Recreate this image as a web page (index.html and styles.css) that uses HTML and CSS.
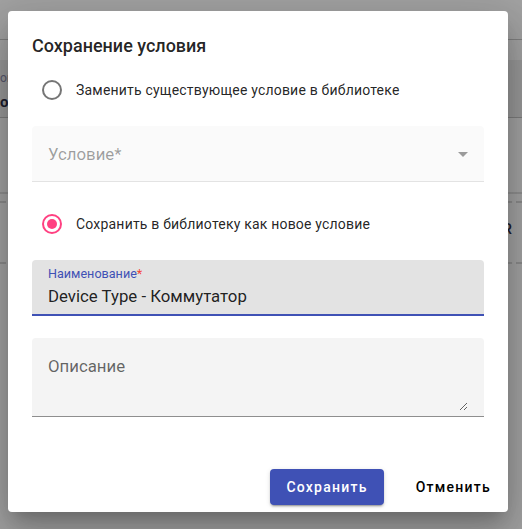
FILE: index.html
```html
<!DOCTYPE html>
<html lang="ru">
<head>
<meta charset="utf-8">
<title>Сохранение условия</title>
<link rel="stylesheet" href="styles.css">
</head>
<body>
<div class="page">
  <div class="pg-top"></div>
  <div class="pg-strip"></div>
  <div class="pg-field">
    <span class="pg-label">оиск</span>
    <span class="pg-value">ом</span>
  </div>
  <div class="pg-space"></div>
  <div class="pg-rule"></div>
  <div class="pg-dash"></div>
  <div class="pg-action"><span>CLEAR</span></div>
  <div class="pg-dash"></div>
</div>

<div class="dialog">
  <h2 class="title">Сохранение условия</h2>

  <label class="radio radio-first">
    <span class="circle"></span>
    <span class="radio-label">Заменить существующее условие в библиотеке</span>
  </label>

  <div class="select">
    <span class="select-placeholder">Условие*</span>
    <span class="select-arrow"></span>
  </div>

  <label class="radio radio-second">
    <span class="circle checked"><span class="dot"></span></span>
    <span class="radio-label">Сохранить в библиотеку как новое условие</span>
  </label>

  <div class="name-field">
    <div class="name-label">Наименование<span class="req">*</span></div>
    <div class="name-value">Device Type - Коммутатор</div>
  </div>

  <div class="desc-field">
    <textarea class="desc-input" placeholder="Описание"></textarea>
  </div>

  <div class="actions">
    <button class="btn btn-primary">Сохранить</button>
    <button class="btn btn-plain">Отменить</button>
  </div>
</div>
</body>
</html>
```

FILE: styles.css
```css
* { box-sizing: border-box; }

html, body {
  margin: 0;
  padding: 0;
}

body {
  width: 522px;
  height: 529px;
  overflow: hidden;
  position: relative;
  background: #a2a2a2;
  font-family: Roboto, "Noto Sans", sans-serif;
}

/* background page under the backdrop */
.page {
  display: flex;
  flex-direction: column;
}

.pg-top {
  height: 40px;
  border-bottom: 1px solid #7f7f7f;
}

.pg-strip {
  height: 20px;
}

.pg-field {
  height: 58px;
  background: #989898;
  border-bottom: 1px solid #7c7c7c;
  display: flex;
  flex-direction: column;
  padding-top: 11px;
}

.pg-label {
  font-size: 12px;
  line-height: 14px;
  color: #56566c;
}

.pg-value {
  margin-top: 8px;
  font-size: 15px;
  line-height: 18px;
  font-weight: 700;
  color: #1c1c2c;
}

.pg-space {
  height: 74px;
}

.pg-rule {
  height: 2px;
  background: #8e8e8e;
}

.pg-dash {
  margin-top: 7px;
  border-top: 2px dashed #8a8a8a;
}

.pg-action {
  height: 52px;
  display: flex;
  align-items: center;
  justify-content: flex-end;
  padding-right: 9px;
  font-size: 15px;
  font-weight: 500;
  color: #1c1c2c;
  letter-spacing: 1px;
}

/* dialog */
.dialog {
  position: absolute;
  left: 8px;
  top: 11px;
  width: 500px;
  padding: 19px 24px 7px;
  background: #fff;
  border-radius: 4px;
  box-shadow: 0 11px 15px -7px rgba(0,0,0,.2),
              0 24px 38px 3px rgba(0,0,0,.14),
              0 9px 46px 8px rgba(0,0,0,.12);
}

.title {
  margin: 0;
  font-size: 18px;
  line-height: 32px;
  font-weight: 500;
  color: rgba(0,0,0,.87);
}

.radio {
  display: flex;
  align-items: center;
  gap: 14px;
  height: 20px;
  margin-left: 10px;
  font-size: 14px;
  line-height: 20px;
  letter-spacing: 0.2px;
  color: rgba(0,0,0,.87);
}

.radio-first { margin-top: 18px; }
.radio-second { margin-top: 32px; }

.circle {
  width: 20px;
  height: 20px;
  flex: none;
  border: 2px solid rgba(0,0,0,.54);
  border-radius: 50%;
  display: flex;
  align-items: center;
  justify-content: center;
}

.circle.checked {
  border-color: #ff4081;
}

.dot {
  width: 10px;
  height: 10px;
  border-radius: 50%;
  background: #ff4081;
}

.select {
  margin-top: 26px;
  height: 56px;
  padding: 18px 16px 0;
  background: #fafafa;
  border-bottom: 1px solid #e3e3e3;
  border-radius: 4px 4px 0 0;
  display: flex;
  justify-content: space-between;
  align-items: flex-start;
}

.select-placeholder {
  font-size: 16.8px;
  line-height: 20px;
  color: rgba(0,0,0,.38);
}

.select-arrow {
  margin-top: 8px;
  width: 0;
  height: 0;
  border-left: 5px solid transparent;
  border-right: 5px solid transparent;
  border-top: 5px solid rgba(0,0,0,.38);
}

.name-field {
  margin-top: 26px;
  padding: 7px 16px 8px;
  background: #e3e3e3;
  border-radius: 4px 4px 0 0;
  border-bottom: 2px solid #3f51b5;
}

.name-label {
  font-size: 12.6px;
  line-height: 14px;
  color: #3f51b5;
}

.req {
  color: #f44336;
}

.name-value {
  margin-top: 5px;
  font-size: 16.8px;
  line-height: 20px;
  color: rgba(0,0,0,.87);
}

.desc-field {
  margin-top: 22px;
  padding: 18px 16px 5px;
  background: #f4f4f4;
  border-radius: 4px 4px 0 0;
  border-bottom: 1px solid rgba(0,0,0,.42);
}

.desc-input {
  display: block;
  width: 100%;
  height: 55px;
  margin: 0;
  padding: 0;
  border: none;
  outline: none;
  background: transparent;
  font-family: Roboto, "Noto Sans", sans-serif;
  font-size: 16.8px;
  line-height: 20px;
  color: rgba(0,0,0,.87);
  resize: vertical;
}

.desc-input::placeholder {
  color: rgba(0,0,0,.6);
  opacity: 1;
}

.actions {
  margin-top: 52px;
  margin-right: -23px;
  display: flex;
  justify-content: flex-end;
  gap: 16px;
}

.btn {
  height: 36px;
  padding: 0 16px;
  border: none;
  border-radius: 4px;
  font-family: Roboto, "Noto Sans", sans-serif;
  font-size: 14px;
  font-weight: 500;
  line-height: 36px;
  letter-spacing: 1.25px;
  background: transparent;
  color: rgba(0,0,0,.87);
  cursor: pointer;
}

.btn-primary {
  background: #3f51b5;
  color: #fff;
  box-shadow: 0 3px 1px -2px rgba(0,0,0,.2),
              0 2px 2px 0 rgba(0,0,0,.14),
              0 1px 5px 0 rgba(0,0,0,.12);
}

.btn-plain {
  color: #000;
}
```
